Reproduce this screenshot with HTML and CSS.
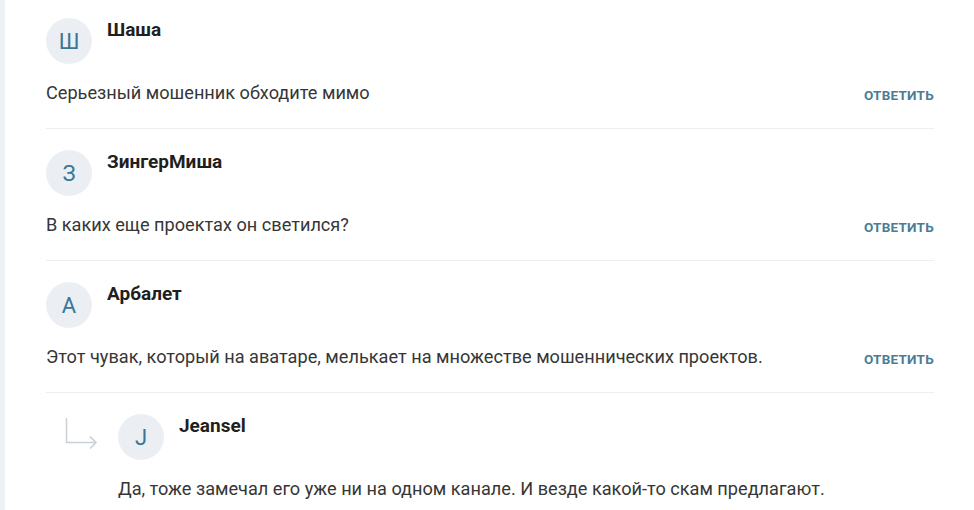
FILE: index.html
```html
<!DOCTYPE html>
<html lang="ru">
<head>
<meta charset="utf-8">
<link rel="stylesheet" href="styles.css">
</head>
<body>
<div class="page">
  <div class="comments">
    <div class="comment">
      <div class="head">
        <div class="avatar">Ш</div>
        <div class="name">Шаша</div>
      </div>
      <div class="body">
        <p class="text">Серьезный мошенник обходите мимо</p>
        <a class="reply-btn">Ответить</a>
      </div>
    </div>
    <div class="comment">
      <div class="head">
        <div class="avatar">З</div>
        <div class="name">ЗингерМиша</div>
      </div>
      <div class="body">
        <p class="text">В каких еще проектах он светился?</p>
        <a class="reply-btn">Ответить</a>
      </div>
    </div>
    <div class="comment">
      <div class="head">
        <div class="avatar">A</div>
        <div class="name">Арбалет</div>
      </div>
      <div class="body">
        <p class="text">Этот чувак, который на аватаре, мелькает на множестве мошеннических проектов.</p>
        <a class="reply-btn">Ответить</a>
      </div>
    </div>
    <div class="comment child">
      <svg class="arrow" width="34" height="28" viewBox="0 0 34 28">
        <path d="M1.5 1 V25.5 H31 M25 19.5 L31 25.5 L25 31.5" fill="none" stroke="#c9d0d6" stroke-width="1.5"/>
      </svg>
      <div class="head">
        <div class="avatar">J</div>
        <div class="name">Jeansel</div>
      </div>
      <div class="body">
        <p class="text">Да, тоже замечал его уже ни на одном канале. И везде какой-то скам предлагают.</p>
      </div>
    </div>
  </div>
</div>
</body>
</html>
```
FILE: styles.css
```css
html, body {
  margin: 0;
  padding: 0;
  background: #fff;
}
body {
  font-family: Roboto, "Liberation Sans", Arial, sans-serif;
  color: #333;
}
.page {
  border-left: 5px solid #eef1f4;
  min-height: 510px;
  box-sizing: border-box;
  padding: 0 40px 0 41px;
}
.comment {
  position: relative;
  padding: 21px 0 23px;
  border-bottom: 1px solid #eceff1;
}
.comment:first-child {
  padding-top: 18px;
}
.comment.child {
  padding-left: 72px;
  border-bottom: none;
}
.arrow {
  position: absolute;
  left: 19px;
  top: 24px;
  overflow: visible;
}
.head {
  display: flex;
  align-items: flex-start;
  gap: 15px;
  height: 46px;
}
.avatar {
  width: 46px;
  height: 46px;
  border-radius: 50%;
  background: #ebeff3;
  color: #3a7794;
  font-size: 22px;
  display: flex;
  align-items: center;
  justify-content: center;
  flex-shrink: 0;
}
.name {
  margin-top: 1px;
  font-weight: 700;
  font-size: 19px;
  line-height: 22px;
  color: #1f1f1f;
}
.body {
  display: flex;
  align-items: center;
  justify-content: space-between;
  margin-top: 17px;
  height: 24px;
}
.text {
  margin: 0;
  font-size: 18.15px;
  line-height: 24px;
  color: #363636;
}
.reply-btn {
  margin-top: 4px;
  font-size: 13.5px;
  font-weight: 700;
  text-transform: uppercase;
  color: #4a7c96;
  letter-spacing: 0.25px;
  cursor: pointer;
}
```
